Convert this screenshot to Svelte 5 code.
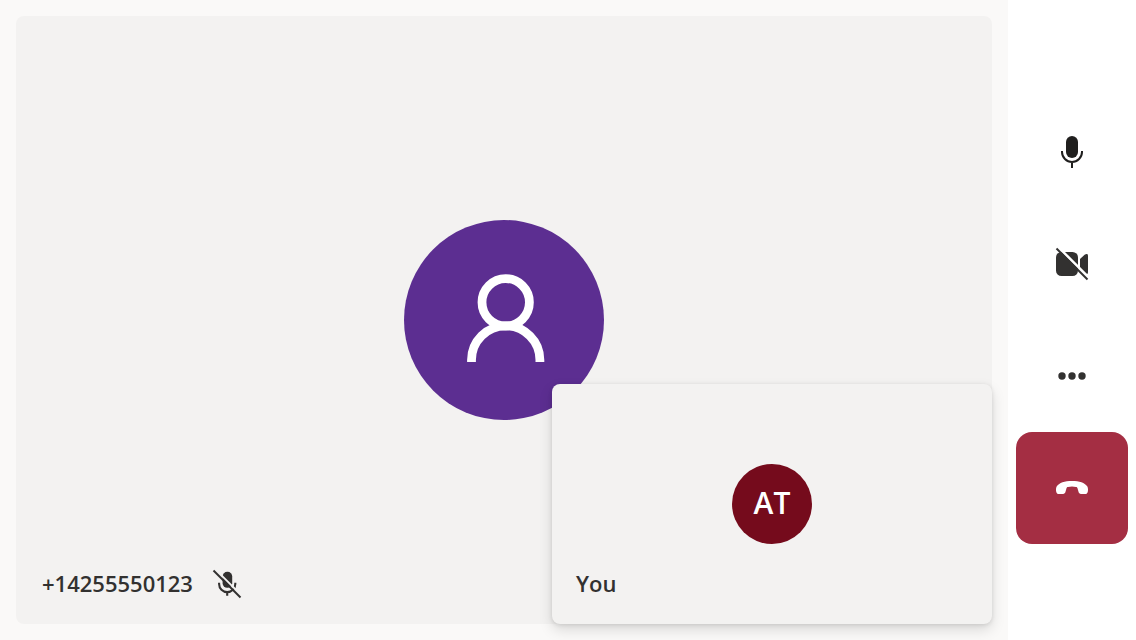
<script>
  const caller = '+14255550123';
  const initials = 'AT';
</script>

<main class="call">
  <section class="stage">
    <article class="tile remote" aria-label="Remote participant">
      <div class="avatar large">
        <svg viewBox="0 0 200 200" fill="none" stroke="#fff" stroke-width="8.8" aria-hidden="true">
          <circle cx="101.7" cy="82.3" r="23.7" />
          <path d="M67.5 142V140A34.1 34.1 0 0 1 135.9 140V142" />
        </svg>
      </div>
      <footer class="label">
        <span class="name number">{caller}</span>
        <svg class="muted" viewBox="0 0 32 32" aria-hidden="true">
          <rect x="11.6" y="3.8" width="9.6" height="16" rx="4.6" fill="#323130" />
          <path d="M8.1 14.7V16A8.1 8.1 0 0 0 24.3 16V14.7M16.2 24V27.8" fill="none" stroke="#323130" stroke-width="2.1" />
          <path d="M4 .9L31.6 28.5" stroke="#f3f2f1" stroke-width="1.9" />
          <path d="M2.5 2.5L29.5 29.5" stroke="#323130" stroke-width="2" />
        </svg>
      </footer>
      <aside class="tile local" aria-label="Your video">
        <div class="avatar small">{initials}</div>
        <footer class="label"><span class="name">You</span></footer>
      </aside>
    </article>
  </section>

  <nav class="controls" aria-label="Call controls">
    <button aria-label="Mute">
      <svg viewBox="0 0 64 64" aria-hidden="true">
        <rect x="26" y="16" width="12" height="22" rx="6" fill="#201f1e" />
        <path d="M22 31V32A10 10 0 0 0 42 32V31M32 42V48" fill="none" stroke="#201f1e" stroke-width="2" />
      </svg>
    </button>
    <button aria-label="Turn on camera">
      <svg viewBox="0 0 64 64" aria-hidden="true">
        <rect x="16" y="20" width="22" height="24" rx="5.5" fill="#323130" />
        <path d="M40 27L44.6 22.8Q46 21.8 47 22Q48 22.2 48 23.8V40.2Q48 41.8 47 42Q46 42.2 44.6 41.2L40 37Z" fill="#323130" />
        <path d="M17.5 14.3L49.4 46.2" stroke="#fff" stroke-width="2.6" />
        <path d="M16.5 16.5L47.5 47.5" stroke="#323130" stroke-width="2" />
      </svg>
    </button>
    <button aria-label="More options">
      <svg viewBox="0 0 64 64" fill="#323130" aria-hidden="true">
        <circle cx="22" cy="32" r="3.7" />
        <circle cx="32" cy="32" r="3.7" />
        <circle cx="42" cy="32" r="3.7" />
      </svg>
    </button>
    <button class="hangup" aria-label="Leave call">
      <svg viewBox="0 0 64 64" fill="#fff" aria-hidden="true">
        <path d="M32 25C39.5 25 44.8 26.9 47 30C48 31.4 48.2 33.2 47.9 35.3C47.6 37.4 46.4 38.2 44.6 38.1L41 38C39.6 37.9 38.9 37.2 38.5 35.8L37.5 32.2C37.2 31.3 36.8 31 36 30.9Q32 30.3 28 30.9C27.2 31 26.8 31.3 26.5 32.2L25.5 35.8C25.1 37.2 24.4 37.9 23 38L19.4 38.1C17.6 38.2 16.4 37.4 16.1 35.3C15.8 33.2 16 31.4 17 30C19.2 26.9 24.5 25 32 25Z" />
      </svg>
    </button>
  </nav>
</main>

<style>
  :global(body) {
    margin: 0;
    background: #fff;
  }

  .call {
    display: flex;
    min-height: 100vh;
    color: #323130;
    font: 600 22px/32px 'Segoe UI', 'Open Sans', 'Noto Sans', sans-serif;
  }

  .stage {
    flex: 1;
    display: flex;
    padding: 16px;
    background: #faf9f8;
  }

  .tile {
    display: grid;
    place-items: center;
    box-sizing: border-box;
    border-radius: 8px;
    background: #f3f2f1;
  }

  .tile > * {
    grid-area: 1 / 1;
  }

  .remote {
    flex: 1;
    position: relative;
  }

  .local {
    position: absolute;
    right: 0;
    bottom: 0;
    width: 440px;
    height: 240px;
    box-shadow: 0 6px 14px rgba(0, 0, 0, 0.13), 0 1px 4px rgba(0, 0, 0, 0.11);
  }

  .avatar {
    display: flex;
    align-items: center;
    justify-content: center;
    box-sizing: border-box;
    border-radius: 50%;
    color: #fff;
  }

  .large {
    width: 200px;
    height: 200px;
    background: #5c2e91;
  }

  .large svg {
    width: 100%;
    height: 100%;
  }

  .small {
    width: 80px;
    height: 80px;
    padding-bottom: 2px;
    background: #750b1c;
    font-size: 30px;
  }

  .label {
    place-self: end start;
    display: flex;
    align-items: center;
    gap: 16px;
    padding: 0 24px 23px;
  }

  .name {
    padding-bottom: 2px;
  }

  .number {
    padding-inline: 2px;
  }

  .muted {
    width: 32px;
    height: 32px;
  }

  .controls {
    display: flex;
    flex-direction: column;
    justify-content: center;
    padding: 0 8px;
  }

  button {
    display: flex;
    align-items: center;
    justify-content: center;
    width: 112px;
    height: 112px;
    padding: 0;
    border: 0;
    border-radius: 16px;
    background: transparent;
    cursor: pointer;
  }

  button svg {
    width: 64px;
    height: 64px;
  }

  .hangup {
    background: #a42e43;
  }
</style>
